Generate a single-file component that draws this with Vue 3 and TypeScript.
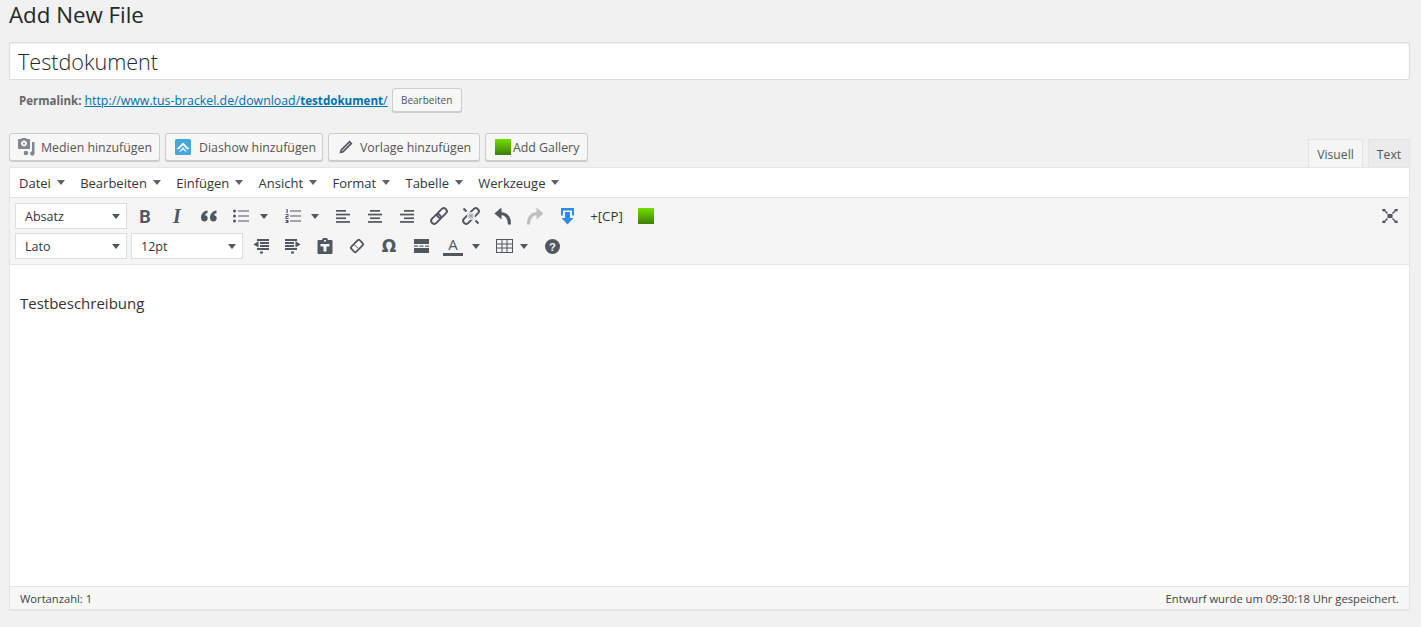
<script setup lang="ts">
const menus: string[] = ['Datei', 'Bearbeiten', 'Einfügen', 'Ansicht', 'Format', 'Tabelle', 'Werkzeuge']
</script>

<template>
  <div class="page">
    <h1 class="title">Add New File</h1>
    <div class="title-input">Testdokument</div>
    <div class="permalink">
      <strong class="pl-label">Permalink:</strong>
      <a class="pl-link" href="#">http://www.tus-brackel.de/download/<b>testdokument</b>/</a>
      <button class="small-btn">Bearbeiten</button>
    </div>

    <div class="media-row">
      <div class="media-buttons">
        <button class="btn b-media">
          <svg width="18" height="18" viewBox="0 0 18 18"><path fill="#82878c" fill-rule="evenodd" d="M2 1h2l1-1h4l1 1h2q1 0 1 1v8q0 1-1 1H2q-1 0-1-1V2q0-1 1-1zM7 2.500a3 3 0 1 0 .01 0zM7 4.500a1 1 0 1 1-.01 0z"/><path fill="#82878c" d="M15 4h2.500v11.500a2.200 2.200 0 1 1-2.500-2.200z"/><circle cx="9" cy="15" r="2.300" fill="#82878c"/></svg>
          Medien hinzufügen
        </button>
        <button class="btn b-show">
          <svg width="16" height="16" viewBox="0 0 16 16"><rect width="16" height="16" rx="1.500" fill="#45a8d8"/><path fill="#fff" d="M8 3.500 14.500 10h-2.700L8 6.300 4.200 10H1.500z"/><path fill="#d4ecf7" d="M8 8 12 12.500H9.800L8 10.700 6.200 12.500H4z"/></svg>
          Diashow hinzufügen
        </button>
        <button class="btn b-tpl">
          <svg width="14" height="14" viewBox="0 0 14 14"><path fill="#50575e" fill-rule="evenodd" d="M10.500.5 13.500 3.500 4.500 12.500.5 13.500 1.500 9.500zM10.400 3 3 10.400 2.500 11.500 3.600 11 11 3.600z"/></svg>
          Vorlage hinzufügen
        </button>
        <button class="btn b-gal"><span class="green"></span>Add Gallery</button>
      </div>
      <div class="tabs">
        <span class="tab active">Visuell</span>
        <span class="tab text-tab">Text</span>
      </div>
    </div>

    <div class="editor">
      <div class="menubar">
        <span v-for="m in menus" :key="m" class="menu">{{ m }}<i class="caret"></i></span>
      </div>
      <div class="toolbar">
        <div class="tb-row">
          <div class="select"><span>Absatz</span><i class="caret dark"></i></div>
          <div class="icons first">
            <span class="ic b-ic">B</span>
            <span class="ic i-ic">I</span>
            <span class="ic">
              <svg width="18" height="14" viewBox="0 0 18 14"><path d="M7.500 1.500v2.500C6 4.500 5.300 5 5 6.200c1.500 0 2.700 1 2.700 3S6.200 12.500 4.300 12.500 1 11 1 8.500C1 5 3.500 2 7.500 1.500zM16.500 1.500v2.500c-1.500.5-2.200 1-2.500 2.200 1.500 0 2.700 1 2.700 3s-1.500 3.300-3.400 3.300S10 11 10 8.500C10 5 12.500 2 16.500 1.500z" fill="#50575e"/></svg>
            </span>
            <span class="ic list ul">
              <svg width="16" height="14" viewBox="0 0 16 14"><g fill="#50575e"><circle cx="1.500" cy="2" r="1.500"/><circle cx="1.500" cy="7" r="1.500"/><circle cx="1.500" cy="12" r="1.500"/><rect x="5" y="1.500" width="11" height="1"/><rect x="5" y="6.500" width="11" height="1"/><rect x="5" y="11.500" width="11" height="1"/></g></svg>
              <i class="caret dark"></i>
            </span>
            <span class="ic list ol">
              <svg width="16" height="15" viewBox="0 0 16 15"><g fill="#50575e"><rect x="5" y="1.500" width="11" height="1"/><rect x="5" y="6.500" width="11" height="1"/><rect x="5" y="11.500" width="11" height="1"/><rect x="1.500" y="0" width="1.200" height="4"/><rect x=".5" y="5" width="3" height="1"/><rect x="2.500" y="6" width="1" height="1"/><rect x=".5" y="7" width="3" height="1"/><rect x=".5" y="8" width="1" height="1"/><rect x=".5" y="9" width="3" height="1"/><rect x=".5" y="11" width="3" height="1"/><rect x="1.500" y="12" width="2" height="1"/><rect x=".5" y="13" width="3" height="1"/></g></svg>
              <i class="caret dark"></i>
            </span>
            <span class="ic">
              <svg width="14" height="13" viewBox="0 0 14 13"><g fill="#50575e"><rect y="0" width="10" height="1.700"/><rect y="3.700" width="14" height="1.700"/><rect y="7.400" width="10" height="1.700"/><rect y="11.100" width="14" height="1.700"/></g></svg>
            </span>
            <span class="ic">
              <svg width="14" height="13" viewBox="0 0 14 13"><g fill="#50575e"><rect x="2" y="0" width="10" height="1.700"/><rect y="3.700" width="14" height="1.700"/><rect x="2" y="7.400" width="10" height="1.700"/><rect y="11.100" width="14" height="1.700"/></g></svg>
            </span>
            <span class="ic">
              <svg width="14" height="13" viewBox="0 0 14 13"><g fill="#50575e"><rect x="4" y="0" width="10" height="1.700"/><rect y="3.700" width="14" height="1.700"/><rect x="4" y="7.400" width="10" height="1.700"/><rect y="11.100" width="14" height="1.700"/></g></svg>
            </span>
            <span class="ic">
              <svg width="18" height="18" viewBox="0 0 18 18"><g fill="none" stroke="#50575e" stroke-width="2"><rect x="-5.500" y="-3" width="11" height="6" rx="3" transform="translate(6 12) rotate(-45)"/><rect x="-5.500" y="-3" width="11" height="6" rx="3" transform="translate(12 6) rotate(-45)"/></g></svg>
            </span>
            <span class="ic">
              <svg width="18" height="18" viewBox="0 0 18 18"><g fill="none" stroke="#50575e" stroke-width="2"><rect x="-5.500" y="-3" width="11" height="6" rx="3" transform="translate(6 12) rotate(-45)"/><rect x="-5.500" y="-3" width="11" height="6" rx="3" transform="translate(12 6) rotate(-45)"/></g><circle cx="9" cy="9" r="4" fill="#f5f5f5"/><path fill="none" stroke="#9a9ea2" stroke-width="1" d="M9 5.500v7M5.500 9h7M6.500 6.500l5 5M11.500 6.500l-5 5"/><path fill="none" stroke="#50575e" stroke-width="2" d="M1.500 1.500l3 3M16.500 16.500l-3-3"/></svg>
            </span>
            <span class="ic">
              <svg width="18" height="18" viewBox="0 0 18 18"><path fill="#50575e" d="M7.500.5v12L.5 6.500z"/><path fill="none" stroke="#50575e" stroke-width="3" d="M6 6.500c6 0 9.500 3.500 9.500 11"/></svg>
            </span>
            <span class="ic">
              <svg width="18" height="18" viewBox="0 0 18 18"><path fill="#bdbfc1" d="M10.500.5v12l7-6z"/><path fill="none" stroke="#bdbfc1" stroke-width="3" d="M12 6.500c-6 0-9.500 3.500-9.500 11"/></svg>
            </span>
            <span class="ic">
              <svg width="13" height="17" viewBox="0 0 13 17"><path fill="#2e8bea" d="M0 0h13v7.500h-2V2.500H2v5H0z"/><path fill="#2e8bea" d="M4 4h5v6h3.500L6.500 16.500.5 10H4z"/></svg>
            </span>
            <span class="ic cp">+[CP]</span>
            <span class="ic"><span class="green"></span></span>
          </div>
          <span class="fullscreen">
            <svg width="16" height="14" viewBox="0 0 16 14"><g fill="#50575e"><rect x="5.500" y="5" width="5" height="4"/><path d="M0 0h4L3 1l3 3-1 1-3-3-1 1zM16 0h-4l1 1-3 3 1 1 3-3 1 1zM0 14h4l-1-1 3-3-1-1-3 3-1-1zM16 14h-4l1-1-3-3 1-1 3 3 1-1z"/></g></svg>
          </span>
        </div>
        <div class="tb-row">
          <div class="select"><span>Lato</span><i class="caret dark"></i></div>
          <div class="select"><span>12pt</span><i class="caret dark"></i></div>
          <div class="icons second">
            <span class="ic">
              <svg width="16" height="15" viewBox="0 0 16 15"><g fill="#50575e"><rect x="4" y="0" width="12" height="2"/><rect x="7" y="3" width="9" height="2"/><rect x="7" y="6" width="9" height="2"/><rect x="4" y="9" width="12" height="2"/><rect x="7" y="12.500" width="3" height="2"/><path d="M5.500 2v6.500L.5 5.500z"/></g></svg>
            </span>
            <span class="ic">
              <svg width="16" height="15" viewBox="0 0 16 15"><g fill="#50575e"><rect x="0" y="0" width="12" height="2"/><rect x="0" y="3" width="9" height="2"/><rect x="0" y="6" width="9" height="2"/><rect x="0" y="9" width="12" height="2"/><rect x="6" y="12.500" width="3" height="2"/><path d="M10.500 2v6.500l5-3z"/></g></svg>
            </span>
            <span class="ic">
              <svg width="16" height="16" viewBox="0 0 16 16"><path fill="#50575e" fill-rule="evenodd" d="M6 0h4l1 2h3.500q1 0 1 1v12q0 1-1 1h-13q-1 0-1-1V3q0-1 1-1H5zM7 2v1.500h2V2zM3.500 6v2.500h3v5h3v-5h3V6z"/></svg>
            </span>
            <span class="ic">
              <svg width="16" height="16" viewBox="0 0 16 16"><g stroke="#50575e" stroke-width="1.800" fill="#fafafa"><rect x="-6" y="-3.500" width="12" height="7" rx="1.300" transform="translate(8 8) rotate(-45)"/><path d="M5.500 6.800 9.200 10.500" fill="none" stroke-width="1"/></g></svg>
            </span>
            <span class="ic omega">Ω</span>
            <span class="ic">
              <svg width="15" height="14" viewBox="0 0 15 14"><g fill="#50575e"><rect y="0" width="15" height="5"/><rect y="9" width="15" height="5"/><rect y="6.500" width="4" height="1.200"/><rect x="5.500" y="6.500" width="4" height="1.200"/><rect x="11" y="6.500" width="4" height="1.200"/></g></svg>
            </span>
            <span class="ic list color">
              <span class="color-a">A</span>
              <i class="caret dark"></i>
            </span>
            <span class="ic list tbl">
              <svg width="17" height="14" viewBox="0 0 17 14"><path fill="#50575e" fill-rule="evenodd" d="M0 0h17v14H0zM1 1v3.500h4.500V1zM6.500 1v3.500h4V1zM11.500 1v3.500H16V1zM1 5.500V8.500h4.500V5.500zM6.500 5.500V8.500h4V5.500zM11.500 5.500V8.500H16V5.500zM1 9.500V13h4.500V9.500zM6.500 9.500V13h4V9.500zM11.500 9.500V13H16V9.500z"/></svg>
              <i class="caret dark"></i>
            </span>
            <span class="ic">
              <svg width="15" height="15" viewBox="0 0 16 16"><circle cx="8" cy="8" r="8" fill="#50575e"/><text x="8" y="12.500" text-anchor="middle" class="q">?</text></svg>
            </span>
          </div>
        </div>
      </div>
      <div class="content">Testbeschreibung</div>
      <div class="status">
        <span>Wortanzahl: 1</span>
        <span>Entwurf wurde um 09:30:18 Uhr gespeichert.</span>
      </div>
    </div>
  </div>
</template>

<style>
html, body { margin: 0; background: #f1f1f1; }
</style>

<style scoped>
.page {
  box-sizing: border-box;
  height: 627px;
  padding: 0 11px 0 9px;
  background: #f1f1f1;
  font-family: "Open Sans", "Noto Sans", sans-serif;
  color: #32373c;
  overflow: hidden;
}
.title {
  margin: 0;
  height: 42px;
  box-sizing: border-box;
  font-size: 22.300px;
  line-height: 29px;
  font-weight: 400;
  color: #23282d;
}
.title-input {
  box-sizing: border-box;
  height: 38px;
  border: 1px solid #ddd;
  border-radius: 2px;
  background: #fff;
  padding: 0 8px;
  font-size: 21.600px;
  font-weight: 300;
  line-height: 38px;
  color: #23282d;
  box-shadow: inset 0 1px 2px rgba(0, 0, 0, .07);
}
.permalink {
  height: 24px;
  margin-top: 8px;
  padding-left: 10px;
  display: flex;
  align-items: center;
  font-size: 12.350px;
  color: #666;
  white-space: nowrap;
}
.pl-label { margin-right: 3px; font-size: 11.500px; }
.pl-link { color: #0073aa; text-decoration: underline; }
.pl-link b { font-weight: 700; font-size: 11.600px; }
.small-btn {
  box-sizing: border-box;
  height: 24px;
  width: 70px;
  margin-left: 4px;
  padding: 0;
  border: 1px solid #ccc;
  border-radius: 3px;
  background: #f7f7f7;
  box-shadow: 0 1px 0 #ccc;
  font: 400 10px "Open Sans", sans-serif;
  color: #555;
}
.media-row {
  margin-top: 21px;
  height: 34px;
  display: flex;
  justify-content: space-between;
  align-items: flex-end;
}
.media-buttons {
  align-self: flex-start;
  display: flex;
  gap: 5px;
}
.btn {
  box-sizing: border-box;
  height: 28px;
  display: flex;
  align-items: center;
  justify-content: flex-start;
  padding: 0;
  border: 1px solid #ccc;
  border-radius: 3px;
  background: #f7f7f7;
  box-shadow: 0 1px 0 #ccc;
  font: 400 12.350px "Open Sans", sans-serif;
  color: #555;
  white-space: nowrap;
}
.btn svg, .btn .green { flex: none; }
.b-media { width: 151px; padding-left: 7px; gap: 6px; }
.b-show { width: 158px; padding-left: 9px; gap: 8px; }
.b-tpl { width: 152px; padding-left: 10px; gap: 7px; }
.b-gal { width: 103px; padding-left: 9px; gap: 2px; }
.green {
  display: block;
  width: 16px;
  height: 16px;
  background: linear-gradient(#72e000, #3f7d0a);
}
.tabs { display: flex; gap: 5px; }
.tab {
  box-sizing: border-box;
  width: 42px;
  height: 28px;
  text-align: center;
  line-height: 29px;
  font-size: 12.200px;
  color: #555;
  background: #ebebeb;
  border: 1px solid #e2e4e7;
  border-bottom: 0;
}
.tab.active {
  width: 55px;
  background: #f5f5f5;
}
.editor {
  box-sizing: border-box;
  border: 1px solid #e5e5e5;
  height: 443px;
  background: #fff;
  box-shadow: 0 1px 1px rgba(0, 0, 0, .04);
  display: flex;
  flex-direction: column;
}
.menubar {
  height: 29px;
  flex: none;
  display: flex;
  align-items: center;
  padding-left: 9px;
  gap: 15.300px;
  font-size: 13px;
  color: #32373c;
  background: #fff;
  border-bottom: 1px solid #e5e5e5;
}
.menu { display: flex; align-items: center; white-space: nowrap; }
.caret {
  display: inline-block;
  flex: none;
  width: 0;
  height: 0;
  margin-left: 6px;
  border-left: 4px solid transparent;
  border-right: 4px solid transparent;
  border-top: 5px solid #60646a;
}
.caret.dark { border-top-color: #50575e; }
.toolbar {
  flex: none;
  height: 67px;
  box-sizing: border-box;
  background: #f5f5f5;
  border-bottom: 1px solid #e5e5e5;
  padding: 5px 0 0 5px;
}
.tb-row {
  height: 26px;
  margin-bottom: 4px;
  display: flex;
  align-items: center;
  gap: 4px;
  position: relative;
}
.select {
  box-sizing: border-box;
  width: 112px;
  height: 26px;
  background: #fff;
  border: 1px solid #ddd;
  display: flex;
  align-items: center;
  justify-content: space-between;
  padding: 0 6px 0 9px;
  font-size: 12.500px;
  color: #32373c;
}
.icons { display: flex; align-items: center; }
.icons.first { margin-left: -2px; }
.icons.second { margin-left: -2px; }
.ic {
  width: 32px;
  height: 26px;
  flex: none;
  display: flex;
  align-items: center;
  justify-content: center;
  color: #50575e;
}
.list { box-sizing: border-box; justify-content: flex-start; padding-left: 8px; }
.ul { width: 52px; }
.ul .caret { margin-left: 11px; }
.ol { width: 50px; }
.ol .caret { margin-left: 10px; }
.color { width: 51px; padding-left: 6px; }
.color .caret { margin-left: 9px; }
.tbl { width: 48px; }
.tbl .caret { margin-left: 7px; }
.b-ic { font: 700 18px Roboto, sans-serif; }
.i-ic { font: italic 700 20px "Liberation Serif", serif; }
.cp { font-size: 13.300px; color: #32373c; width: 47px; white-space: nowrap; }
.omega { font: 700 17px "DejaVu Sans", sans-serif; }
.color-a {
  box-sizing: border-box;
  width: 20px;
  height: 20px;
  text-align: center;
  font: 400 15px/16px "Open Sans", sans-serif;
  border-bottom: 3px solid #50575e;
}
.q { font: 700 12px "Liberation Sans", sans-serif; fill: #f5f5f5; }
.fullscreen {
  position: absolute;
  right: 11px;
  top: 6px;
  display: flex;
}
.content {
  flex: 1;
  padding: 28px 10px 0;
  font-size: 15px;
  line-height: 20px;
  color: #333;
  background: #fff;
}
.status {
  flex: none;
  height: 23px;
  box-sizing: border-box;
  background: #f7f7f7;
  border-top: 1px solid #e5e5e5;
  display: flex;
  justify-content: space-between;
  align-items: center;
  padding: 0 10px;
  font-size: 11.200px;
  color: #444;
}
</style>
